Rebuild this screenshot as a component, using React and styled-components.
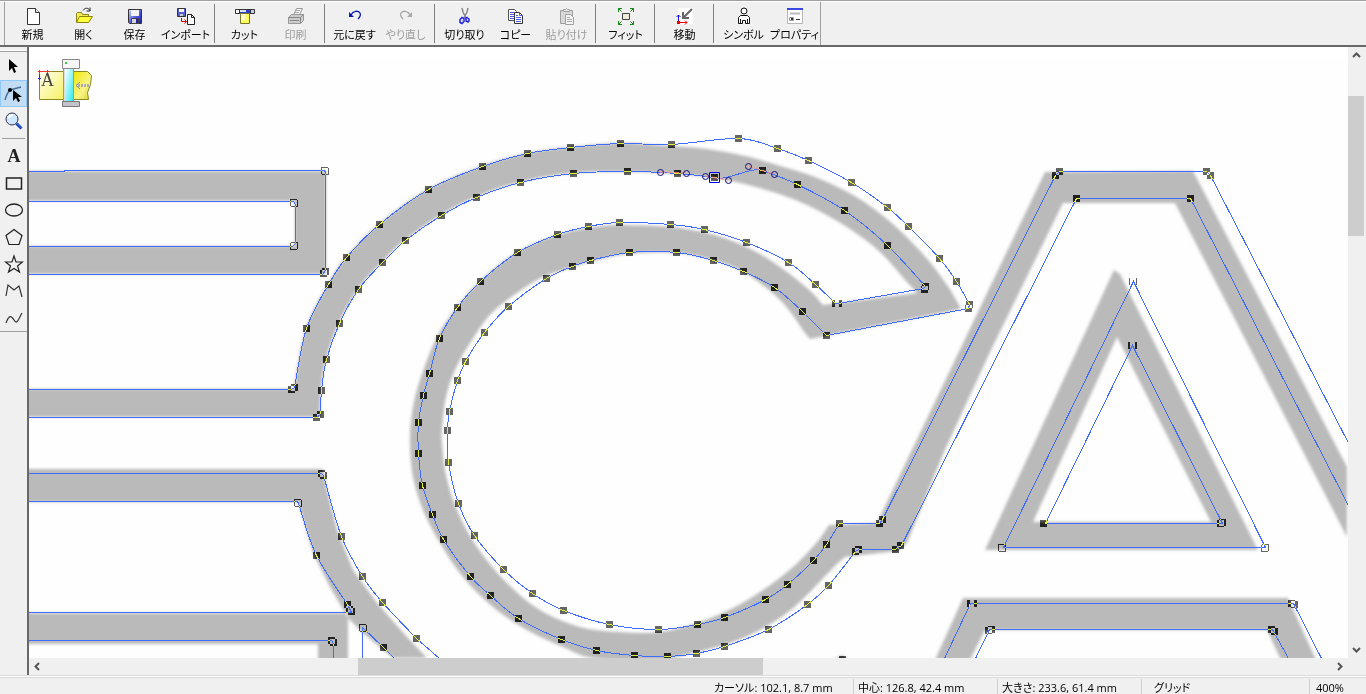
import React, { useState } from 'react'
import styled, { createGlobalStyle } from 'styled-components'

const GlobalStyle = createGlobalStyle`
  * {
    box-sizing: border-box;
  }
  body {
    margin: 0;
    background: #f0f0f0;
    color: #000;
    font-family: 'Open Sans', 'Noto Sans CJK JP', sans-serif;
    font-feature-settings: 'palt';
  }
  button {
    font: inherit;
    font-feature-settings: inherit;
    color: inherit;
    border: none;
    background: none;
    padding: 0;
  }
`

const Window = styled.div`
  display: grid;
  grid-template-rows: auto minmax(0, 1fr) auto;
  height: 100vh;
  overflow: hidden;
`

const Toolbar = styled.header`
  display: flex;
  padding: 1px 0 0 4px;
  border-top: 1px solid #a0a0a0;
  border-bottom: 2px solid #696969;
  box-shadow: inset 0 1px #fff;
`

const ToolbarBody = styled.div`
  display: flex;
  height: 43px;
  padding: 1px 0 1px 2px;
  border-left: 1px solid #a0a0a0;
  border-right: 1px solid #a0a0a0;
`

const Separator = styled.span`
  width: 1px;
  margin: 1px 4px 1px 3px;
  background: #808080;
`

const ToolbarButton = styled.button`
  display: flex;
  flex-direction: column;
  align-items: center;
  width: 51px;
  padding-top: 3px;
  font-size: 11px;
  line-height: 18px;
  white-space: nowrap;
  color: ${(props) => (props.disabled ? '#9c9c9c' : '#000')};
`

const Icon = styled.svg`
  display: block;
  width: 20px;
  height: 20px;
  flex: none;
`

const Workspace = styled.main`
  display: grid;
  grid-template-columns: 27px minmax(0, 1fr);
  min-height: 0;
`

const ToolPalette = styled.nav`
  display: flex;
  flex-direction: column;
  align-self: start;
  padding-top: 6px;
  border-bottom: 1px solid #a0a0a0;
  background: linear-gradient(#fff, #fff) 0 3px / 100% 1px no-repeat,
    linear-gradient(#a0a0a0, #a0a0a0) 0 4px / 100% 1px no-repeat;
`

const ToolButton = styled.button`
  display: flex;
  align-items: center;
  justify-content: center;
  height: 27px;
  background: ${(props) => (props.$active ? '#c2dcf3' : 'transparent')};
  border: 1px solid ${(props) => (props.$active ? '#90c8f6' : 'transparent')};
`

const PaletteRule = styled.span`
  height: 1px;
  margin: 4px 2px 3px;
  background: #a0a0a0;
`

const View = styled.section`
  display: grid;
  grid-template-columns: minmax(0, 1fr) 16px;
  grid-template-rows: minmax(0, 1fr) 17px;
  min-height: 0;
  padding-right: 2px;
  border-left: 2px solid #696969;
`

const Canvas = styled.svg`
  display: block;
  width: 100%;
  height: 100%;
  background: #fefefe;
`

const ScrollBar = styled.div`
  display: flex;
  flex-direction: ${(props) => (props.$vertical ? 'column' : 'row')};
  background: #f0f0f0;
`

const ScrollArrow = styled.button`
  display: grid;
  place-items: center;
  flex: 0 0 17px;
`

const Track = styled.div`
  display: flex;
  flex: 1;
  flex-direction: inherit;
`

const TrackSpace = styled.span`
  flex: 0 0 ${(props) => props.$size};
`

const Thumb = styled.span`
  flex: 0 0 ${(props) => props.$size};
  background: #cdcdcd;
`

const StatusBar = styled.footer`
  display: flex;
  justify-content: flex-end;
  height: 19px;
  padding-top: 3px;
  border-top: 1px solid #dcdcdc;
  font-size: 11px;
  line-height: 17px;
  white-space: nowrap;
  box-shadow: inset 0 1px #fff, inset 0 2px #d8d8d8;
`

const StatusCell = styled.span`
  flex: 0 0 ${(props) => props.$width};
  padding-left: ${(props) => props.$pad || '4px'};
  border-left: 1px solid ${(props) => (props.$first ? 'transparent' : '#d0d0d0')};
`

const icons = {
  new: (
    <>
      <path d="M4.5 2.5h8l4 4v12h-12z" fill="#fff" stroke="#333" />
      <path d="M12.5 2.5v4h4" fill="#eee" stroke="#333" />
    </>
  ),
  open: (
    <>
      <path d="M2.5 16V7.5l1-1h4l1 2h6v3" fill="#f4ee54" stroke="#8a8410" />
      <path d="M2.5 16.5l3-6h13l-4 6z" fill="#ffff3c" stroke="#8a8410" />
      <path d="M9 4.5c2-3 5-3 7 0m0-3v3.5h-3.5" fill="none" stroke="#222" />
    </>
  ),
  save: (
    <>
      <defs>
        <linearGradient id="disk" x1="0" y1="0" x2="1" y2="1">
          <stop offset="0" stopColor="#d4d8ff" />
          <stop offset="0.6" stopColor="#4850d8" />
          <stop offset="1" stopColor="#1818a0" />
        </linearGradient>
      </defs>
      <path d="M3.5 3.5h13v14h-12l-1-1z" fill="url(#disk)" stroke="#333" />
      <path d="M6 4h8v6H6z" fill="#f4f4f8" />
      <path d="M6.5 12.5h7v5h-7z" fill="#d8d8dc" stroke="#444" />
      <path d="M11 13h2v4h-2z" fill="#2222aa" />
    </>
  ),
  import: (
    <>
      <path d="M1.5 2.5h8v8h-8z" fill="#5860d0" stroke="#333" />
      <path d="M3 3h5v3H3z" fill="#fff" />
      <path d="M4 8h3v2H4z" fill="#ccc" />
      <path d="M5.5 12v3.5h5M8.5 13.5l2 2-2 2" fill="none" stroke="#d00" />
      <path d="M11.5 8.5h4l3 3v7h-7z" fill="#fff" stroke="#222" />
      <path d="M15.5 8.5v3h3" fill="none" stroke="#222" />
    </>
  ),
  cut: (
    <>
      <path d="M.5 3.5h4v4h-4z" fill="#fff" stroke="#333" />
      <path d="M15.5 3.5h4v4h-4z" fill="#c8ccf0" stroke="#333" />
      <path d="M4.5 3.5h11v4h-11z" fill="#2c3ed0" stroke="#333" />
      <path d="M5 4h6v2H5z" fill="#dfe4ff" />
      <path d="M5.5 7.5h9v10h-9z" fill="#ffff60" stroke="#77772c" />
      <path d="M6 8h4v6H6z" fill="#fffbd0" />
    </>
  ),
  print: (
    <>
      <path d="M7.5 9l3-6.5h6l-3 6.5" fill="#f6f6f6" stroke="#999" />
      <path d="M9 6.5h4M10 4.5h4" stroke="#aaa" />
      <path d="M2.5 11.5l3-3h12v6l-3 3h-12z" fill="#ccc" stroke="#999" />
      <path d="M2.5 11.5h12v6M14.5 11.5l3-3M4 14.5h9" fill="none" stroke="#888" />
    </>
  ),
  undo: (
    <>
      <path d="M6 9c2-4 7-5 9-2 1 2 0 4-2 6" fill="none" stroke="#0a1bb0" strokeWidth="1.3" />
      <path d="M4 6v5h5z" fill="#0a1bb0" />
    </>
  ),
  redo: (
    <>
      <path d="M14 9c-2-4-7-5-9-2-1 2 0 4 2 6" fill="none" stroke="#a8a8a8" strokeWidth="1.3" />
      <path d="M16 6v5h-5z" fill="#a8a8a8" />
    </>
  ),
  scissors: (
    <>
      <path d="M7 2l1 4 3 6M13 2l-1 4-3 6" fill="none" stroke="#888" strokeWidth="1.5" />
      <path d="M7 11.5l2 1v3l-2 2-2-1v-3zM12 11.5l2 1.5v2l-1 1-2-1v-3z" fill="#dce0ff" stroke="#2424dd" strokeWidth="1.5" />
    </>
  ),
  copy: (
    <>
      <path d="M2.5 3.5h6l2 2v9h-8z" fill="#fff" stroke="#555" />
      <path d="M4 6.5h4M4 8.5h5M4 10.5h5M4 12.5h4" stroke="#4c5ce0" />
      <path d="M8.5 6.5h5l3 3v8h-8z" fill="#fff" stroke="#333" />
      <path d="M13.5 6.5v3h3M10 9.5h2M10 11.5h5M10 13.5h5M10 15.5h5" fill="none" stroke="#4c5ce0" />
    </>
  ),
  paste: (
    <>
      <path d="M3.5 4.5h12v13h-12z" fill="#d8d8d8" stroke="#a0a0a0" />
      <path d="M6.5 5.5v-2h2l1-1 1 1h2v2z" fill="#eee" stroke="#a0a0a0" />
      <path d="M8.5 8.5h5l3 3v7h-8z" fill="#f4f4f4" stroke="#a0a0a0" />
      <path d="M10 11.5h3M10 13.5h5M10 15.5h5" stroke="#aaa" />
    </>
  ),
  fit: (
    <>
      <path d="M6.5 7.5h7v6h-7z" fill="#efebd8" stroke="#444" />
      <path
        d="M2.5 6V2.5H6M2.5 2.5l3 3M14 2.5h3.5V6M17.5 2.5l-3 3M2.5 15v3.5H6M2.5 18.5l3-3M14 18.5h3.5V15M17.5 18.5l-3-3"
        fill="none"
        stroke="#108a10"
      />
    </>
  ),
  move: (
    <>
      <path d="M3 2h15v16H3z" fill="#fff" />
      <path d="M17 3l-8 8M8 6v6h6" fill="none" stroke="#666" strokeWidth="2" />
      <path d="M3.5 16V9M1.5 11l2-2 2 2" fill="none" stroke="#1010e0" />
      <path d="M5 16.5h7M10 14.5l2 2-2 2" fill="none" stroke="#e00" />
      <path d="M2 15h3v3H2z" fill="#e00" />
    </>
  ),
  symbol: (
    <>
      <circle cx="10" cy="5" r="3" fill="#fff" stroke="#111" />
      <path d="M4.5 17.5v-6l2-2h7l2 2v6h-2v-4.500v4.500h-2v-3h-3v3h-2v-4.500v4.500z" fill="#fff" stroke="#111" />
    </>
  ),
  props: (
    <>
      <path d="M2.5 3.5h15v14h-15z" fill="#fff" stroke="#b8b8b8" />
      <path d="M2 2h16v2H2z" fill="#3848e0" />
      <path d="M5 7.500h10" stroke="#bbb" strokeWidth="2" />
      <path d="M4.5 11.5h4v3h-4z" fill="#fff" stroke="#999" />
      <path d="M6 12h2v2H6zM11 13h4v1h-4z" fill="#333" />
    </>
  ),
  pointer: <path d="M5 2v12l3-3 2 5 2-1-2-5h4z" fill="#000" />,
  node: (
    <>
      <path d="M1 16Q3 9 6 6L17 3" fill="none" stroke="#4a6f9c" strokeWidth="1.5" />
      <circle cx="6" cy="6" r="2" fill="#000" />
      <path d="M9 6v11l3-3 2 4 2-1-2-4h4z" fill="#000" />
    </>
  ),
  zoom: (
    <>
      <circle cx="8" cy="8" r="6" fill="#cfe8ff" stroke="#334" />
      <path d="M5 7q1-3 4-3" fill="none" stroke="#fff" strokeWidth="2" />
      <path d="M12.5 12.5l5 5" stroke="#123aa8" strokeWidth="3" />
      <path d="M12.5 12l5 5" stroke="#3e86ff" />
    </>
  ),
  text: (
    <text x="10" y="16" textAnchor="middle" fontFamily="'Liberation Serif', serif" fontWeight="bold" fontSize="18" fill="#222">
      A
    </text>
  ),
  rect: <path d="M2.5 5h15v11h-15z" fill="none" stroke="#222" strokeWidth="1.5" />,
  ellipse: <ellipse cx="10" cy="10" rx="8.5" ry="6" fill="none" stroke="#222" strokeWidth="1.3" />,
  pentagon: <path d="M10 2.5l8 6-3 9H5l-3-9z" fill="none" stroke="#222" strokeWidth="1.2" />,
  star: <path d="M10 2l2 6h6.5l-5 4 2 6-5.500-3.500L4.500 18l2-6-5-4H8z" fill="none" stroke="#222" strokeWidth="1.2" />,
  polyline: <path d="M2 15L4 4l6 5 5-4 3 11" fill="none" stroke="#333" strokeWidth="1.2" />,
  curve: <path d="M2 15C5 7 7 7 10 12s4 0 8-7" fill="none" stroke="#333" strokeWidth="1.2" />,
}

const toolbarGroups = [
  [
    { label: '新規', icon: 'new' },
    { label: '開く', icon: 'open' },
    { label: '保存', icon: 'save' },
    { label: 'インポート', icon: 'import' },
  ],
  [
    { label: 'カット', icon: 'cut' },
    { label: '印刷', icon: 'print', disabled: true },
  ],
  [
    { label: '元に戻す', icon: 'undo' },
    { label: 'やり直し', icon: 'redo', disabled: true },
  ],
  [
    { label: '切り取り', icon: 'scissors' },
    { label: 'コピー', icon: 'copy' },
    { label: '貼り付け', icon: 'paste', disabled: true },
  ],
  [{ label: 'フィット', icon: 'fit' }],
  [{ label: '移動', icon: 'move' }],
  [
    { label: 'シンボル', icon: 'symbol' },
    { label: 'プロパティ', icon: 'props' },
  ],
]

const toolGroups = [
  ['pointer', 'node', 'zoom'],
  ['text', 'rect', 'ellipse', 'pentagon', 'star', 'polyline', 'curve'],
]

// curve points, each one is also an editable node
const outerArc = [
  [294, 387], [306, 328], [328, 284], [346, 257], [379, 224], [428, 189], [482, 166], [527, 153], [570, 147],
  [620, 143], [671, 144], [738, 138], [777, 148], [808, 160], [851, 182], [887, 207], [908, 226], [939, 258],
  [956, 281], [969, 304],
]
const innerRing = [
  [826, 335], [802, 311], [774, 287], [743, 271], [713, 260], [676, 252], [629, 252], [590, 260], [572, 266],
  [546, 278], [508, 306], [484, 332], [465, 361], [457, 380], [449, 411], [447, 430], [448, 462], [458, 503],
  [474, 535], [503, 569], [532, 593], [563, 610], [609, 624], [658, 629], [697, 624], [724, 617], [765, 599],
  [787, 584], [813, 560], [826, 544], [839, 523],
]
const innerArcLeft = [
  [320, 414], [321, 390], [326, 359], [339, 323], [358, 289], [382, 262], [405, 240], [441, 215], [476, 197],
  [520, 182], [573, 173], [627, 171], [677, 173], [714, 177],
]
const innerArcRight = [[762, 170], [797, 184], [844, 210], [887, 245], [925, 286]]
const outerRing = [
  [835, 303], [815, 284], [788, 262], [746, 242], [704, 229], [670, 224], [619, 222], [588, 226], [557, 234],
  [517, 252], [480, 281], [457, 307], [439, 338], [429, 373], [423, 395], [418, 422], [418, 453], [422, 485],
  [432, 514], [443, 539], [470, 576], [490, 595], [518, 618], [561, 639], [596, 650], [634, 655], [667, 656],
  [696, 653], [724, 646], [768, 629], [807, 604], [828, 585], [855, 551],
]
const tailOuter = [[323, 475], [341, 536], [362, 576], [382, 602], [416, 638]]
const tailInner = [[298, 503], [316, 555], [347, 604]]

const cornerNodes = [
  [324, 170], [325, 171], [293, 202], [294, 203], [293, 246], [294, 245], [323, 273], [325, 271],
  [291, 389], [316, 417], [321, 473], [297, 502], [349, 609], [351, 611], [362, 627], [363, 628],
  [331, 640], [333, 642], [383, 647], [924, 289], [968, 308], [838, 303], [879, 523], [882, 519],
  [858, 549], [895, 549], [900, 545], [1055, 175], [1059, 171], [1206, 171], [1210, 175],
  [1076, 198], [1190, 198], [1132, 281], [1133, 281], [1131, 345], [1133, 345], [1043, 523],
  [1222, 522], [1220, 523], [1001, 547], [1002, 548], [1264, 548], [1265, 547], [970, 603], [973, 603],
  [1291, 603], [1294, 604], [988, 630], [991, 629], [1271, 629], [1274, 631], [842, 659],
]

const nodes = [
  ...outerArc, ...innerRing, ...innerArcLeft, ...innerArcRight, ...outerRing, ...tailOuter, ...tailInner, ...cornerNodes,
]

// Catmull-Rom spline through the points
const spline = (pts) =>
  pts
    .slice(1)
    .map((p, i) => {
      const a = pts[i]
      const before = pts[i - 1] || a
      const after = pts[i + 2] || p
      const c1 = [a[0] + (p[0] - before[0]) / 6, a[1] + (p[1] - before[1]) / 6]
      const c2 = [p[0] - (after[0] - a[0]) / 6, p[1] - (after[1] - a[1]) / 6]
      return `C${c1} ${c2} ${p}`
    })
    .join('')
const curve = (pts) => `L${pts[0]}${spline(pts)}`

const outlinePath = [
  'M0 171H64V170H324L325 172V270L322 274H0',
  'M0 201H293L295 204V243L292 246H0',
  `M0 389H291${curve(outerArc)}L968 308L826 335${spline(innerRing)}H879L882 519L1055 175L1059 171H1206L1210 175L2000 1707`,
  `M0 417H316${curve(innerArcLeft)}C728 181 748 166 762 170${spline(innerArcRight)}L923 288L838 303H835${spline(outerRing)}L858 549H895L901 545L1076 198H1190L2000 1773`,
  'M1133 281L1003 547H1265Z',
  'M1132 345L1045 523H1222Z',
  'M0 473H321' + curve(tailOuter) + 'L439 658',
  'M0 501H297' + curve(tailInner) + 'L351 612H0',
  'M0 640H331L333 643V658',
  'M362 658V627L383 647L394 658',
  'M944 658L970 603H1293L1321 658',
  'M975 658L989 629H1272L1288 658',
].join('')

const nodePath = nodes.map(([x, y]) => `M${x - 3} ${y - 3}h7v7h-7z`).join('')

const handles = [[660, 172], [686, 173], [705, 176], [728, 180], [748, 166], [774, 174]]

// grey lettering of the scanned template
const scanPath = [
  'M0 171H326V274H0V246H295V201H0Z',
  `M0 389H294${spline([...outerArc.slice(0, 10), [671, 146], [707, 149], [745, 156], [777, 165], [815, 177], [853, 195], [887, 219], [922, 253], [947, 285], [961, 309]])}L810 339${curve([
    [805, 333], [783, 303], [753, 278], [723, 263], [677, 253], [627, 254], [590, 262], [570, 268], [537, 280],
    [495, 310], [474, 337], [456, 368], [446, 397], [442, 430], [442, 443], [446, 475], [457, 510], [477, 547],
    [507, 583], [540, 610], [580, 627], [620, 632], [660, 632], [700, 622], [733, 608], [763, 590], [793, 567],
    [817, 542], [829, 525],
  ])}L877 523L1045 172L1193 171L1347 467V537L1175 203H1063L991 350L944 452L907 543L898 551L845 557${curve([
    [845, 557], [833, 568], [807, 595], [787, 613], [760, 630], [730, 643], [693, 653], [653, 661], [593, 658],
    [563, 647], [527, 630], [493, 607], [463, 577], [440, 543], [423, 510], [413, 477], [410, 443], [412, 413],
    [420, 380], [437, 337], [457, 307], [480, 281], [517, 252], [557, 235], [588, 228], [619, 225], [670, 227],
    [707, 233], [740, 244], [773, 262], [807, 288], [823, 305],
  ])}L917 293${curve([
    [907, 282], [880, 252], [847, 227], [807, 205], [773, 192], [740, 183], [707, 177], [660, 173], [627, 172],
    ...innerArcLeft.slice(0, 11).reverse(),
  ])}V417H0Z`,
  'M1114 270L985 550H1258L1120 274ZM1117 337L1211 522H1033Z',
  'M0 469H323L327 490L337 530L353 570L377 603L407 637L427 658H393L363 633L348 618L330 587L313 553L298 502H0Z',
  'M0 613H348V660H318V644H0Z',
  'M935 660L963 598H1288L1316 660H1281L1267 630H985L970 660Z',
  'M834 660L842 655L848 660Z',
].join('')

function Machine() {
  return (
    <g>
      <defs>
        <linearGradient id="sheet" x1="0" y1="0" x2="1" y2="1">
          <stop offset="0" stopColor="#fffff2" />
          <stop offset="1" stopColor="#f6f060" />
        </linearGradient>
        <linearGradient id="roll" x1="0" y1="0" x2="1" y2="1">
          <stop offset="0" stopColor="#f0e800" />
          <stop offset="0.6" stopColor="#f8f488" />
          <stop offset="1" stopColor="#d8d020" />
        </linearGradient>
        <linearGradient id="glass" x1="0" y1="0" x2="1" y2="1">
          <stop offset="0" stopColor="#fff" />
          <stop offset="1" stopColor="#30e8f0" />
        </linearGradient>
      </defs>
      <path d="M39.5 71.5h24v28h-24z" fill="url(#sheet)" stroke="#8a8a20" />
      <path d="M73.5 71.5h14l4 4-1 9-3 8 1 7h-15z" fill="url(#roll)" stroke="#8a8a20" />
      <path d="M63.5 68.5h10v33h-10z" fill="#ddd" stroke="#999" />
      <path d="M65 69h8v32h-8z" fill="url(#glass)" />
      <path d="M62.5 59.5h17v9h-17z" fill="#f6f6f6" stroke="#888" />
      <path d="M62.5 101.5h17v5h-17z" fill="#c4c4c8" stroke="#777" />
      <path d="M65 62h2v2h-2z" fill="#30d040" />
      <path d="M38 71.5h11M39.5 70v3M47.5 70v3" stroke="#f03030" strokeDasharray="3 1" />
      <path d="M39.5 74v6M38 78.5h3" stroke="#3030e0" />
      <path d="M80 82l-4 3.5 4 3.5" fill="none" stroke="#889" />
      <path d="M78 85.5h11" stroke="#aab" strokeWidth="3" strokeDasharray="2 1" />
      <text x="41" y="86" fontFamily="'Liberation Serif', serif" fontSize="18" fill="#444">
        A
      </text>
    </g>
  )
}

function Drawing() {
  return (
    <Canvas role="img" aria-label="キャンバス">
      <defs>
        <filter id="soft" x="-5%" y="-5%" width="110%" height="110%">
          <feGaussianBlur stdDeviation="1.7" />
        </filter>
        <clipPath id="node-area">
          <path d={nodePath} clipRule="evenodd" />
        </clipPath>
      </defs>
      <g transform="translate(-29 -47)">
        <path d="M0 0H2000V58H0z" fill="#fff" />
        <path d={scanPath} fill="#bababa" fillRule="evenodd" filter="url(#soft)" />
        <path d={outlinePath} transform="translate(.5 .5)" fill="none" stroke="#3f6cff" shapeRendering="crispEdges" />
        <path d={nodePath} fill="#999" fillRule="evenodd" style={{ mixBlendMode: 'difference' }} />
        <g clipPath="url(#node-area)">
          <path d={outlinePath} transform="translate(.5 .5)" fill="none" stroke="#e0f03c" shapeRendering="crispEdges" />
        </g>
        <path d="M660 172L686 173M705 176L728 180M748 166L774 174" stroke="#ff8a80" strokeDasharray="5 2" />
        {handles.map(([x, y]) => (
          <circle key={x} cx={x + 0.5} cy={y + 0.5} r="3" fill="none" stroke="#101078" />
        ))}
        <path d="M709.5 172.5h10v10h-10z" fill="none" stroke="#0000f0" />
        <Machine />
      </g>
    </Canvas>
  )
}

function Scroll({ vertical, before, thumb }) {
  return (
    <ScrollBar $vertical={vertical}>
      <ScrollArrow aria-label={vertical ? '上へ' : '左へ'}>
        <svg width="9" height="9" fill="none" stroke="#555" strokeWidth="2">
          <path d={vertical ? 'M1 6l3.5-3.5L8 6' : 'M6 1L2.5 4.5L6 8'} />
        </svg>
      </ScrollArrow>
      <Track>
        <TrackSpace $size={before} />
        <Thumb $size={thumb} />
      </Track>
      <ScrollArrow aria-label={vertical ? '下へ' : '右へ'}>
        <svg width="9" height="9" fill="none" stroke="#555" strokeWidth="2">
          <path d={vertical ? 'M1 3l3.5 3.5L8 3' : 'M3 1l3.5 3.5L3 8'} />
        </svg>
      </ScrollArrow>
    </ScrollBar>
  )
}

function App() {
  const [tool, setTool] = useState('node')

  return (
    <>
      <GlobalStyle />
      <Window>
        <Toolbar>
          <ToolbarBody>
            {toolbarGroups.map((group, i) => (
              <React.Fragment key={i}>
                {i > 0 && <Separator />}
                {group.map((item) => (
                  <ToolbarButton key={item.label} disabled={item.disabled}>
                    <Icon viewBox="0 0 20 20" aria-hidden="true">
                      {icons[item.icon]}
                    </Icon>
                    {item.label}
                  </ToolbarButton>
                ))}
              </React.Fragment>
            ))}
          </ToolbarBody>
        </Toolbar>
        <Workspace>
          <ToolPalette>
            {toolGroups.map((group, i) => (
              <React.Fragment key={i}>
                {i > 0 && <PaletteRule />}
                {group.map((name) => (
                  <ToolButton key={name} aria-label={name} $active={tool === name} onClick={() => setTool(name)}>
                    <Icon viewBox="0 0 20 20">{icons[name]}</Icon>
                  </ToolButton>
                ))}
              </React.Fragment>
            ))}
          </ToolPalette>
          <View>
            <Drawing />
            <Scroll vertical before="5.5%" thumb="24.3%" />
            <Scroll before="24.3%" thumb="31.5%" />
          </View>
        </Workspace>
        <StatusBar>
          <StatusCell $width="144px" $first>カーソル: 102.1, 8.7 mm</StatusCell>
          <StatusCell $width="144px">中心: 126.8, 42.4 mm</StatusCell>
          <StatusCell $width="144px">大きさ: 233.6, 61.4 mm</StatusCell>
          <StatusCell $width="168px" $pad="12px">グリッド</StatusCell>
          <StatusCell $width="57px" $pad="6px">400%</StatusCell>
        </StatusBar>
      </Window>
    </>
  )
}

export default App
